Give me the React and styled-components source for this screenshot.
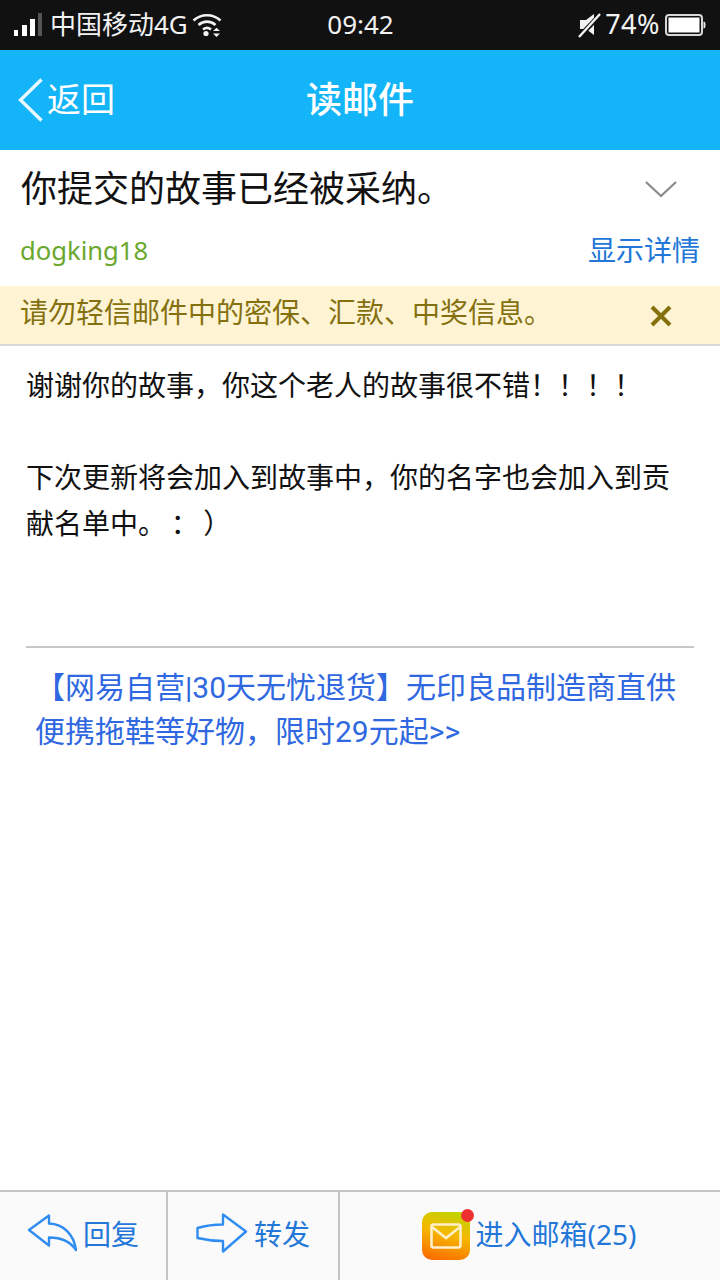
import styled, { createGlobalStyle } from "styled-components";

const FONT = `"Noto Sans", "Noto Sans CJK SC", sans-serif`;

// thin spaces keep the smiley apart, as in the mail
const SECOND_PARAGRAPH = "下次更新将会加入到故事中，你的名字也会加入到贡献名单中。\u2009：\u2009）";

const GlobalStyle = createGlobalStyle`
  html, body {
    margin: 0;
    padding: 0;
    background: #fff;
  }
  * {
    box-sizing: border-box;
  }
`;

const Page = styled.div`
  width: 720px;
  height: 1280px;
  display: flex;
  flex-direction: column;
  font-family: ${FONT};
  text-spacing-trim: space-all;
  background: #fff;
  overflow: hidden;
`;

const StatusBar = styled.div`
  height: 50px;
  background: #111112;
  color: #f2f2f2;
  display: grid;
  grid-template-columns: 1fr auto 1fr;
  align-items: center;
  padding: 0 13px 0 14px;
  font-size: 26px;
  line-height: 48px;
`;

const StatusLeft = styled.div`
  display: flex;
  align-items: center;
  gap: 8px;
`;

const Carrier = styled.span`
  margin-right: -4px;
  padding-bottom: 2px;
  white-space: nowrap;
`;

const Clock = styled.span`
  padding-bottom: 2px;
`;

const StatusRight = styled.div`
  display: flex;
  align-items: center;
  justify-content: flex-end;
  gap: 5px;
`;

const Percent = styled.span`
  margin-left: -2px;
  padding-bottom: 2px;
  font-size: 27px;
  letter-spacing: 0.5px;
`;

const NavBar = styled.div`
  height: 100px;
  background: #14b4f8;
  color: #fff;
  display: grid;
  grid-template-columns: 1fr auto 1fr;
  align-items: center;
  padding: 0 18px;
`;

const BackLink = styled.div`
  display: flex;
  align-items: center;
  gap: 3px;
  font-size: 34px;
`;

const BackLabel = styled.span`
  padding-bottom: 6px;
`;

const NavTitle = styled.div`
  font-size: 36px;
  font-weight: 500;
  padding-bottom: 5px;
`;

const Subject = styled.div`
  height: 78px;
  padding: 0 43px 0 21px;
  display: flex;
  align-items: center;
  justify-content: space-between;
  font-size: 36px;
  color: #111;
`;

const SubjectText = styled.span`
  padding-bottom: 5px;
`;

const SenderRow = styled.div`
  height: 58px;
  padding: 0 20px 14px 20px;
  display: flex;
  align-items: center;
  justify-content: space-between;
`;

const Sender = styled.span`
  font-size: 25.6px;
  color: #6aa72d;
`;

const DetailLink = styled.span`
  padding-bottom: 2px;
  font-size: 28px;
  color: #2277d8;
`;

const Warning = styled.div`
  height: 60px;
  padding: 2px 48px 0 20px;
  background: #fef4d4;
  border-bottom: 2px solid #d8d8d8;
  color: #85700f;
  font-size: 28px;
  display: flex;
  align-items: center;
  justify-content: space-between;
`;

const WarningText = styled.span`
  padding-bottom: 10px;
`;

const Body = styled.div`
  flex: 1;
  padding: 16px 26px 0;
`;

const Paragraph = styled.p`
  margin: 0 0 ${(p) => p.$gap || 0}px;
  font-size: 28px;
  line-height: 46px;
  color: #111;
`;

const Divider = styled.hr`
  margin: 100px 0 0;
  border: 0;
  border-top: 2px solid #c8c8c8;
`;

const Promo = styled.p`
  margin: 18px 0 0;
  padding: 0 9px;
  font-family: "Roboto", "Noto Sans CJK SC", sans-serif;
  font-size: 30px;
  line-height: 44px;
  color: #2f68e0;
`;

const Toolbar = styled.div`
  height: 90px;
  background: #fafafa;
  border-top: 2px solid #c4c4c4;
  display: flex;
  color: #2277d8;
  font-size: 28px;
`;

const ToolButton = styled.div`
  width: ${(p) => p.$width}px;
  flex: ${(p) => (p.$width ? "none" : 1)};
  border-right: ${(p) => (p.$width ? "2px solid #c4c4c4" : "none")};
  padding-right: ${(p) => (p.$width ? 0 : 2)}px;
  display: flex;
  align-items: center;
  justify-content: center;
  gap: 6px;
`;

const ToolLabel = styled.span`
  padding-bottom: 6px;
`;

const ArrowIcon = styled.svg`
  margin-bottom: 6px;
  fill: none;
  stroke: #2f8cf0;
  stroke-width: 2.4;
  stroke-linejoin: round;
`;

const MailBadge = styled.div`
  position: relative;
  width: 48px;
  height: 48px;
  border-radius: 10px;
  background: linear-gradient(195deg, #b8d800 0%, #f5b800 45%, #fb6400 100%);
  display: flex;
  align-items: center;
  justify-content: center;
  &::after {
    content: "";
    position: absolute;
    top: -3px;
    right: -4px;
    width: 13px;
    height: 13px;
    border-radius: 50%;
    background: #ef3030;
  }
`;

const Signal = () => (
  <svg width="28" height="26" viewBox="0 0 28 26">
    <rect x="0" y="18" width="4" height="6" fill="#fff" />
    <rect x="8" y="13" width="5" height="11" fill="#fff" />
    <rect x="16" y="7" width="5" height="17" fill="#fff" />
    <rect x="24" y="1" width="4" height="23" fill="#555" />
  </svg>
);

const Wifi = () => (
  <svg width="30" height="26" viewBox="0 0 30 26" fill="none" stroke="#f2f2f2" strokeWidth="2.6">
    <path d="M1.5 8.5C9 1.5 21 1.5 28.5 8.5" />
    <path d="M6.5 13C11.5 8.5 18.5 8.5 23.5 13" />
    <path d="M11 17.5C13.5 15.5 16.5 15.5 19 17.5" />
    <circle cx="14" cy="21.5" r="2.6" fill="#f2f2f2" stroke="none" />
    <path d="M21 19H28L24.5 15.8Z M21 21.5H28L24.5 25Z" fill="#f2f2f2" stroke="none" />
  </svg>
);

const Muted = () => (
  <svg width="24" height="28" viewBox="0 0 24 28">
    <path d="M2 9H8L16 3V24L8 18H2Z" fill="#f2f2f2" />
    <path d="M1 26L23 3" stroke="#111112" strokeWidth="5" />
    <path d="M1 26L22 3" stroke="#f2f2f2" strokeWidth="2.4" />
  </svg>
);

const Battery = () => (
  <svg width="42" height="24" viewBox="0 0 42 24">
    <rect x="1" y="2" width="36" height="20" rx="3" fill="none" stroke="#d8d8d8" strokeWidth="2" />
    <rect x="3.5" y="4.5" width="31" height="15" fill="#fff" />
    <path d="M38.5 8.5C40 8.5 40.5 9.5 40.5 12C40.5 14.5 40 15.5 38.5 15.5Z" fill="#e8e8e8" />
  </svg>
);

const BackChevron = () => (
  <svg width="26" height="44" viewBox="0 0 26 44" fill="none" stroke="#e8f7ff" strokeWidth="3.4">
    <path d="M23.5 1.5L2.5 22L23.5 42.5" />
  </svg>
);

const ChevronDown = () => (
  <svg width="32" height="18" viewBox="0 0 32 18" fill="none" stroke="#8a8a8a" strokeWidth="2.2">
    <path d="M1 2L16 16L31 2" />
  </svg>
);

const CloseX = () => (
  <svg width="22" height="22" viewBox="0 0 22 22" fill="none" stroke="#85700f" strokeWidth="4">
    <path d="M2 2L20 20M20 2L2 20" />
  </svg>
);

const ReplyArrow = () => (
  <ArrowIcon width="50" height="38" viewBox="0 0 50 38">
    <path d="M2 16L22 1.5V9.5C37 10 47 21 49 36C43 27 34 23.5 22 23.5V31.5Z" />
  </ArrowIcon>
);

const ForwardArrow = () => (
  <ArrowIcon width="52" height="40" viewBox="0 0 52 40">
    <path d="M1.5 15C10 12.5 19 11.5 27 11.5V1.5L50 18.5L27 38.5V28C18 28 10 27 1.5 25Z" />
  </ArrowIcon>
);

const Envelope = () => (
  <svg width="32" height="26" viewBox="0 0 32 26" fill="none" stroke="#fdf0c8" strokeWidth="2.6">
    <rect x="1.5" y="1.5" width="29" height="23" rx="2" />
    <path d="M2 4L16 15L30 4" />
  </svg>
);

export default function App() {
  return (
    <Page>
      <GlobalStyle />
      <StatusBar>
        <StatusLeft>
          <Signal />
          <Carrier>中国移动4G</Carrier>
          <Wifi />
        </StatusLeft>
        <Clock>09:42</Clock>
        <StatusRight>
          <Muted />
          <Percent>74%</Percent>
          <Battery />
        </StatusRight>
      </StatusBar>
      <NavBar>
        <BackLink>
          <BackChevron />
          <BackLabel>返回</BackLabel>
        </BackLink>
        <NavTitle>读邮件</NavTitle>
      </NavBar>
      <Subject>
        <SubjectText>你提交的故事已经被采纳。</SubjectText>
        <ChevronDown />
      </Subject>
      <SenderRow>
        <Sender>dogking18</Sender>
        <DetailLink>显示详情</DetailLink>
      </SenderRow>
      <Warning>
        <WarningText>请勿轻信邮件中的密保、汇款、中奖信息。</WarningText>
        <CloseX />
      </Warning>
      <Body>
        <Paragraph $gap={46}>谢谢你的故事，你这个老人的故事很不错！！！！</Paragraph>
        <Paragraph>{SECOND_PARAGRAPH}</Paragraph>
        <Divider />
        <Promo>【网易自营|30天无忧退货】无印良品制造商直供便携拖鞋等好物，限时29元起&gt;&gt;</Promo>
      </Body>
      <Toolbar>
        <ToolButton $width={168}>
          <ReplyArrow />
          <ToolLabel>回复</ToolLabel>
        </ToolButton>
        <ToolButton $width={172}>
          <ForwardArrow />
          <ToolLabel>转发</ToolLabel>
        </ToolButton>
        <ToolButton>
          <MailBadge>
            <Envelope />
          </MailBadge>
          <ToolLabel>进入邮箱(25)</ToolLabel>
        </ToolButton>
      </Toolbar>
    </Page>
  );
}
